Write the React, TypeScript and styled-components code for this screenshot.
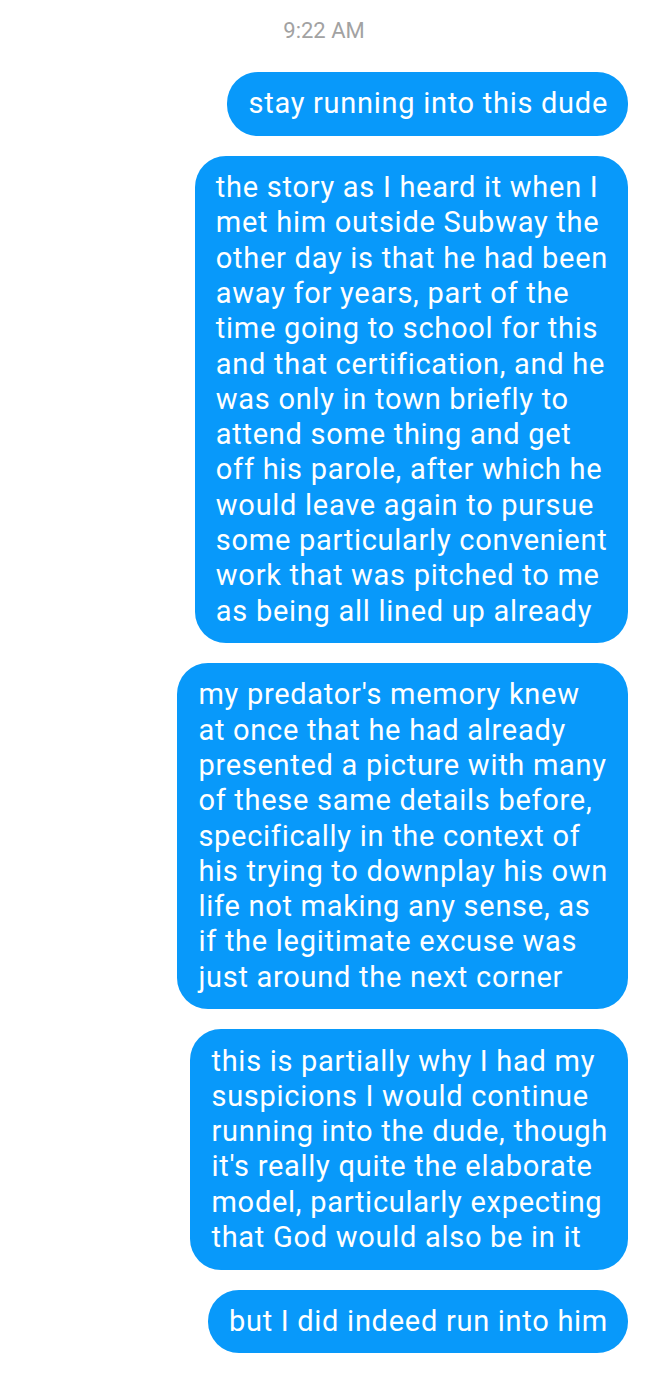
import React from "react";
import styled, { createGlobalStyle } from "styled-components";

const GlobalStyle = createGlobalStyle`
  body {
    margin: 0;
    background: #ffffff;
    font-family: Roboto, "Noto Sans", sans-serif;
  }
`;

const Thread = styled.div`
  display: flex;
  flex-direction: column;
  align-items: flex-end;
  padding: 17px 20px 24px 0;
  gap: 20px;
`;

const Timestamp = styled.div`
  align-self: stretch;
  margin-right: -20px;
  text-align: center;
  font-size: 22px;
  line-height: 28px;
  color: #a2a2a2;
  margin-bottom: 7px;
`;

const Bubble = styled.div`
  background: #0899fa;
  color: #ffffff;
  border-radius: 31px;
  padding: 14.25px 20px 14.25px 21px;
  font-size: 29px;
  line-height: 35.3px;
  letter-spacing: 0.72px;
`;

const Line = styled.span`
  display: block;
  white-space: nowrap;
`;

const messages: string[][] = [
  ["stay running into this dude"],
  [
    "the story as I heard it when I",
    "met him outside Subway the",
    "other day is that he had been",
    "away for years, part of the",
    "time going to school for this",
    "and that certification, and he",
    "was only in town briefly to",
    "attend some thing and get",
    "off his parole, after which he",
    "would leave again to pursue",
    "some particularly convenient",
    "work that was pitched to me",
    "as being all lined up already",
  ],
  [
    "my predator's memory knew",
    "at once that he had already",
    "presented a picture with many",
    "of these same details before,",
    "specifically in the context of",
    "his trying to downplay his own",
    "life not making any sense, as",
    "if the legitimate excuse was",
    "just around the next corner",
  ],
  [
    "this is partially why I had my",
    "suspicions I would continue",
    "running into the dude, though",
    "it's really quite the elaborate",
    "model, particularly expecting",
    "that God would also be in it",
  ],
  ["but I did indeed run into him"],
];

const App = () => {
  return (
    <>
      <GlobalStyle />
      <Thread>
        <Timestamp>9:22 AM</Timestamp>
        {messages.map((lines, i) => (
          <Bubble key={i}>
            {lines.map((line, j) => (
              <Line key={j}>{line}</Line>
            ))}
          </Bubble>
        ))}
      </Thread>
    </>
  );
};

export default App;
